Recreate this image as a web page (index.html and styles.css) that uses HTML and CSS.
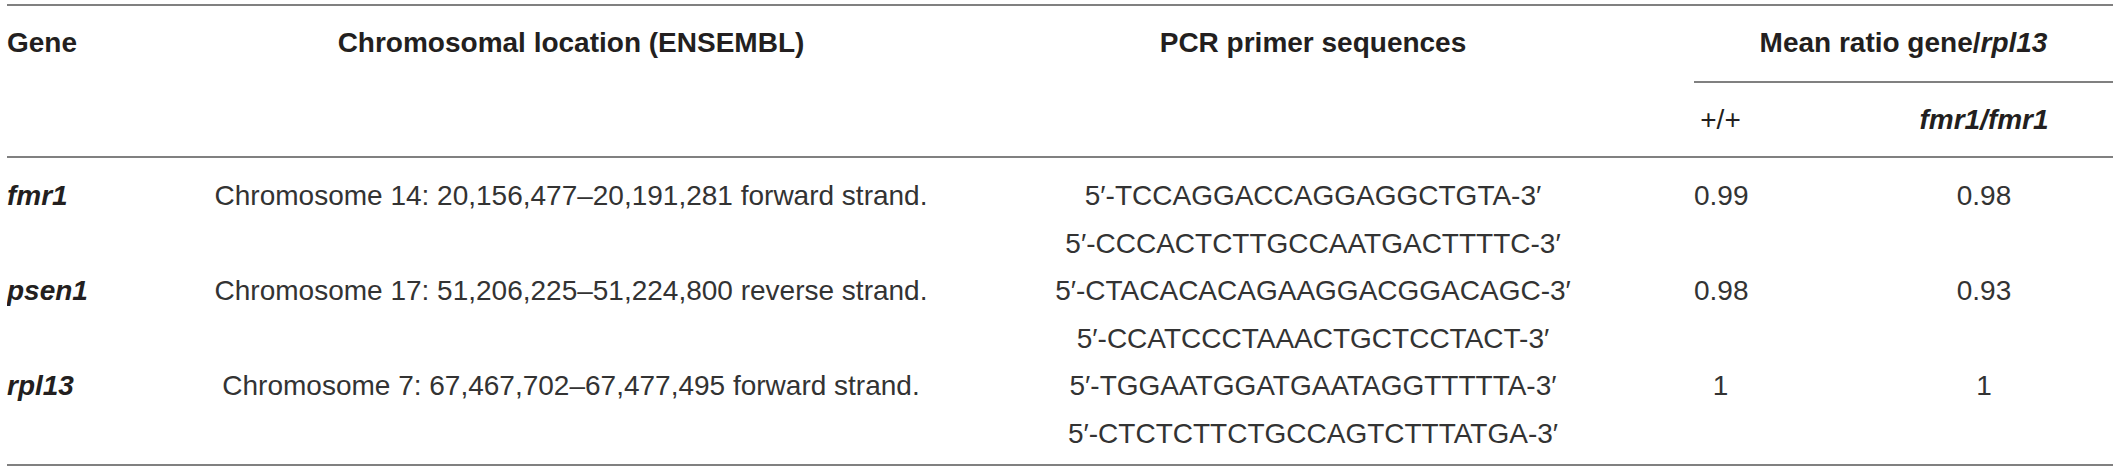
FILE: index.html
```html
<!DOCTYPE html>
<html lang="en">
<head>
<meta charset="utf-8">
<title>Gene table</title>
<link rel="stylesheet" href="styles.css">
</head>
<body>
<table class="gene-table">
  <colgroup>
    <col class="c-gene">
    <col class="c-loc">
    <col class="c-pcr">
    <col class="c-wt">
    <col class="c-mut">
  </colgroup>
  <thead>
    <tr>
      <th rowspan="2" class="h-gene">Gene</th>
      <th rowspan="2" class="h-span">Chromosomal location (ENSEMBL)</th>
      <th rowspan="2" class="h-span">PCR primer sequences</th>
      <th colspan="2" class="h-ratio">Mean ratio gene/<i>rpl13</i></th>
    </tr>
    <tr>
      <th class="h-sub h-wt">+/+</th>
      <th class="h-sub h-mut"><i>fmr1/fmr1</i></th>
    </tr>
  </thead>
  <tbody>
    <tr>
      <td class="gene"><i>fmr1</i></td>
      <td class="loc">Chromosome 14: 20,156,477–20,191,281 forward strand.</td>
      <td class="pcr"><div>5′-TCCAGGACCAGGAGGCTGTA-3′</div><div>5′-CCCACTCTTGCCAATGACTTTTC-3′</div></td>
      <td class="wt">0.99</td>
      <td class="mut">0.98</td>
    </tr>
    <tr>
      <td class="gene"><i>psen1</i></td>
      <td class="loc">Chromosome 17: 51,206,225–51,224,800 reverse strand.</td>
      <td class="pcr"><div>5′-CTACACACAGAAGGACGGACAGC-3′</div><div>5′-CCATCCCTAAACTGCTCCTACT-3′</div></td>
      <td class="wt">0.98</td>
      <td class="mut">0.93</td>
    </tr>
    <tr>
      <td class="gene"><i>rpl13</i></td>
      <td class="loc">Chromosome 7: 67,467,702–67,477,495 forward strand.</td>
      <td class="pcr"><div>5′-TGGAATGGATGAATAGGTTTTTA-3′</div><div>5′-CTCTCTTCTGCCAGTCTTTATGA-3′</div></td>
      <td class="wt">1</td>
      <td class="mut">1</td>
    </tr>
  </tbody>
</table>
</body>
</html>
```

FILE: styles.css
```css
html, body {
  background: #ffffff;
}

body {
  margin: 4px 0 0 7px;
  font-family: "Liberation Sans", Arial, sans-serif;
}

.gene-table {
  width: 2106px;
  table-layout: fixed;
  border-collapse: separate;
  border-spacing: 0;
  border-top: 2px solid #808080;
  font-size: 28px;
  color: #231f20;
}

.c-gene { width: 203px; }
.c-loc  { width: 722px; }
.c-pcr  { width: 762px; }
.c-wt   { width: 161px; }
.c-mut  { width: 258px; }

th {
  font-weight: bold;
  line-height: 42px;
  vertical-align: top;
  text-align: center;
  padding: 16px 0 17px;
  border-bottom: 2px solid #808080;
  white-space: nowrap;
}

.h-gene {
  text-align: left;
}

.h-sub {
  padding: 16px 0 15px;
}

.h-wt {
  font-weight: normal;
  padding-right: 108px;
}

td {
  line-height: 47.5px;
  vertical-align: top;
  text-align: center;
  padding: 0;
  color: #333333;
  white-space: nowrap;
}

tbody tr:first-child td {
  padding-top: 14px;
}

tbody tr:last-child td {
  padding-bottom: 7px;
  border-bottom: 2px solid #808080;
}

td.gene {
  text-align: left;
  font-weight: bold;
  color: #231f20;
}

td.wt {
  padding-right: 108px;
}
```
